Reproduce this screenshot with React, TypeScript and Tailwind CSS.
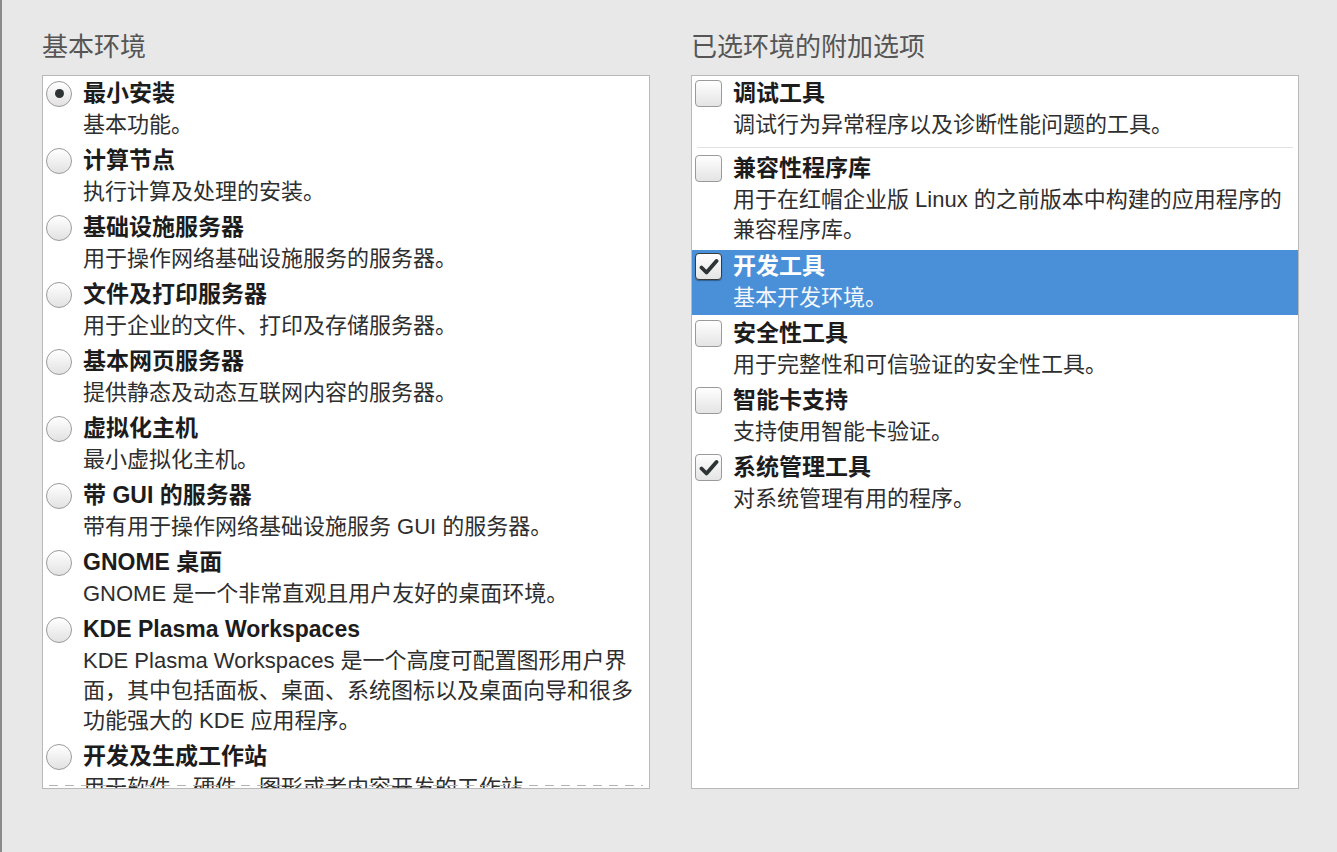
import React from "react";

type Env = { title: string; lines: string[]; selected?: boolean };
type Addon = { title: string; lines: string[]; checked?: boolean; active?: boolean; divider?: boolean };

const environments: Env[] = [
  { title: "最小安装", lines: ["基本功能。"], selected: true },
  { title: "计算节点", lines: ["执行计算及处理的安装。"] },
  { title: "基础设施服务器", lines: ["用于操作网络基础设施服务的服务器。"] },
  { title: "文件及打印服务器", lines: ["用于企业的文件、打印及存储服务器。"] },
  { title: "基本网页服务器", lines: ["提供静态及动态互联网内容的服务器。"] },
  { title: "虚拟化主机", lines: ["最小虚拟化主机。"] },
  { title: "带 GUI 的服务器", lines: ["带有用于操作网络基础设施服务 GUI 的服务器。"] },
  { title: "GNOME 桌面", lines: ["GNOME 是一个非常直观且用户友好的桌面环境。"] },
  {
    title: "KDE Plasma Workspaces",
    lines: [
      "KDE Plasma Workspaces 是一个高度可配置图形用户界",
      "面，其中包括面板、桌面、系统图标以及桌面向导和很多",
      "功能强大的 KDE 应用程序。",
    ],
  },
  { title: "开发及生成工作站", lines: ["用于软件、硬件、图形或者内容开发的工作站。"] },
];

const addons: Addon[] = [
  { title: "调试工具", lines: ["调试行为异常程序以及诊断性能问题的工具。"], divider: true },
  { title: "兼容性程序库", lines: ["用于在红帽企业版 Linux 的之前版本中构建的应用程序的", "兼容程序库。"] },
  { title: "开发工具", lines: ["基本开发环境。"], checked: true, active: true },
  { title: "安全性工具", lines: ["用于完整性和可信验证的安全性工具。"] },
  { title: "智能卡支持", lines: ["支持使用智能卡验证。"] },
  { title: "系统管理工具", lines: ["对系统管理有用的程序。"], checked: true },
];

function Radio({ on }: { on?: boolean }) {
  return (
    <div className="w-[26px] h-[26px] rounded-full border border-[#9a9a9a] bg-gradient-to-b from-white to-[#e2e2e2] shadow-[inset_0_1px_0_white] flex items-center justify-center">
      {on && <div className="w-[9px] h-[9px] rounded-full bg-[#2e3436]" />}
    </div>
  );
}

function Check({ on, active }: { on?: boolean; active?: boolean }) {
  return (
    <div
      className={`w-[27px] h-[27px] rounded-[4px] border bg-gradient-to-b from-white to-[#e4e4e4] flex items-center justify-center ${
        active ? "border-[#3a3a3a] shadow-[0_1px_1px_rgba(0,0,0,0.35)]" : "border-[#9a9a9a]"
      }`}
    >
      {on && (
        <svg width="20" height="18" viewBox="0 0 20 18">
          <path d="M2.5 9.5 L7.5 14.5 L17.5 3" fill="none" stroke="#2e3436" strokeWidth="3.8" strokeLinecap="round" strokeLinejoin="round" />
        </svg>
      )}
    </div>
  );
}

export default function App() {
  return (
    <div className="w-[1337px] h-[852px] bg-[#e8e8e8] border-l-[2px] border-[#8a8a8a] font-['Liberation_Sans','Noto_Sans_CJK_SC',sans-serif] flex gap-[41px] pl-[40px] pt-[30px] overflow-hidden">
      {/* base environment */}
      <div className="flex flex-col w-[608px]">
        <h2 className="text-[26px] leading-[34px] text-[#555555] mb-[11px]">基本环境</h2>
        <div className="relative h-[714px] bg-white border border-[#b9b9b9] overflow-hidden pt-[1px]">
          {environments.map((env) => (
            <div key={env.title} className="flex gap-[11px] pl-[3px] pb-[4px]">
              <div className="h-[33px] flex items-center">
                <Radio on={env.selected} />
              </div>
              <div className="flex flex-col whitespace-nowrap">
                <p className="text-[23px] leading-[33px] font-bold text-[#1c1c1c]">{env.title}</p>
                {env.lines.map((l) => (
                  <p key={l} className="text-[22px] leading-[30px] text-[#2e2e2e]">{l}</p>
                ))}
              </div>
            </div>
          ))}
          <div className="absolute left-[6px] right-[6px] bottom-[2px] h-px bg-[repeating-linear-gradient(90deg,#b4b4b4_0_9px,transparent_9px_16px)]" />
        </div>
      </div>

      {/* add-ons */}
      <div className="flex flex-col w-[608px]">
        <h2 className="text-[26px] leading-[34px] text-[#555555] mb-[11px]">已选环境的附加选项</h2>
        <div className="h-[714px] bg-white border border-[#b9b9b9] overflow-hidden pt-[1px]">
          {addons.map((a, i) => (
            <div key={a.title} className={a.active ? "mb-[2px]" : ""}>
              <div
                className={`flex gap-[11px] pl-[3px] ${
                  a.active ? "bg-[#4a90d9] pb-[2px]" : i === 1 ? "pb-[5px]" : "pb-[4px]"
                }`}
              >
                <div className="h-[33px] flex items-center">
                  <Check on={a.checked} active={a.active} />
                </div>
                <div className="flex flex-col whitespace-nowrap">
                  <p className={`text-[23px] leading-[33px] font-bold ${a.active ? "text-white" : "text-[#1c1c1c]"}`}>{a.title}</p>
                  {a.lines.map((l) => (
                    <p key={l} className={`text-[22px] leading-[30px] ${a.active ? "text-[#f4f8fd]" : "text-[#2e2e2e]"}`}>
                      {l}
                    </p>
                  ))}
                </div>
              </div>
              {a.divider && <div className="h-px bg-[#e2e2e2] mx-[5px] mt-[3px] mb-[4px]" />}
            </div>
          ))}
        </div>
      </div>
    </div>
  );
}
